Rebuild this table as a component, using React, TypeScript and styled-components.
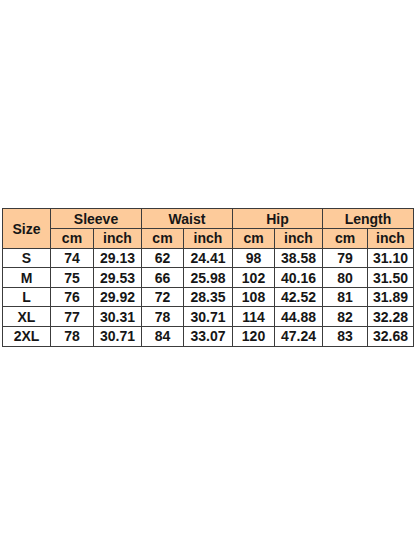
import styled, { createGlobalStyle } from "styled-components";

const GlobalStyle = createGlobalStyle`
  html, body {
    margin: 0;
    padding: 0;
    background: #ffffff;
  }
`;

const Page = styled.div`
  width: 416px;
  height: 555px;
  display: flex;
  align-items: center;
  justify-content: center;
  background: #ffffff;
`;

const Table = styled.table`
  width: 411px;
  border-collapse: collapse;
  table-layout: fixed;
  font-family: "Liberation Sans", Arial, sans-serif;
  font-weight: 700;
  font-size: 14px;
  color: #161616;
`;

const Row = styled.tr`
  height: 19.6px;
`;

const Cell = styled.td<{ $head?: boolean }>`
  border: 1px solid #3c3c3c;
  padding: 0;
  text-align: center;
  vertical-align: middle;
  line-height: 16px;
  background: ${(p) => (p.$head ? "#fdcb9b" : "#ffffff")};
`;

const columns = [48, 43, 48, 42, 49, 42, 48, 45, 46];

const groups = ["Sleeve", "Waist", "Hip", "Length"];

const sizes: string[][] = [
  ["S", "74", "29.13", "62", "24.41", "98", "38.58", "79", "31.10"],
  ["M", "75", "29.53", "66", "25.98", "102", "40.16", "80", "31.50"],
  ["L", "76", "29.92", "72", "28.35", "108", "42.52", "81", "31.89"],
  ["XL", "77", "30.31", "78", "30.71", "114", "44.88", "82", "32.28"],
  ["2XL", "78", "30.71", "84", "33.07", "120", "47.24", "83", "32.68"],
];

const SizeTable = () => {
  return (
    <Table>
      <colgroup>
        {columns.map((w, i) => (
          <col key={i} style={{ width: w }} />
        ))}
      </colgroup>
      <tbody>
        <Row>
          <Cell $head rowSpan={2}>
            Size
          </Cell>
          {groups.map((g) => (
            <Cell $head colSpan={2} key={g}>
              {g}
            </Cell>
          ))}
        </Row>
        <Row>
          {groups.map((g) => [
            <Cell $head key={g + "cm"}>
              cm
            </Cell>,
            <Cell $head key={g + "inch"}>
              inch
            </Cell>,
          ])}
        </Row>
        {sizes.map((r) => (
          <Row key={r[0]}>
            {r.map((v, i) => (
              <Cell key={i}>{v}</Cell>
            ))}
          </Row>
        ))}
      </tbody>
    </Table>
  );
};

export default function App() {
  return (
    <>
      <GlobalStyle />
      <Page>
        <SizeTable />
      </Page>
    </>
  );
}
